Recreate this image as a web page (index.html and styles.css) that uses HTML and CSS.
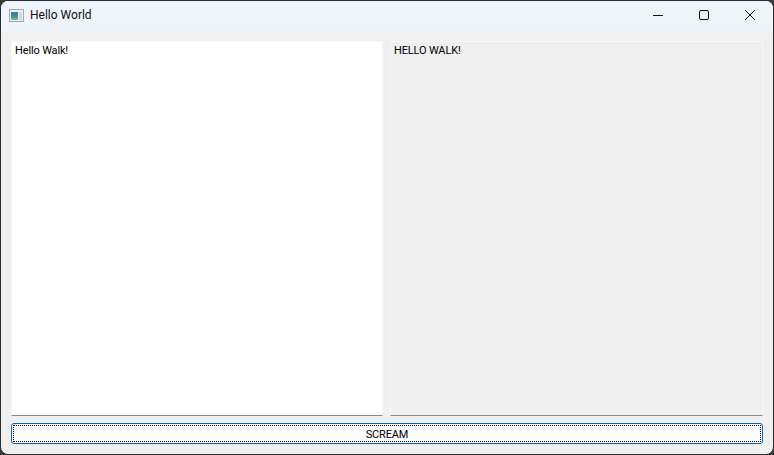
FILE: index.html
```html
<!DOCTYPE html>
<html lang="en">
<head>
    <meta charset="UTF-8">
    <title>Hello World</title>
    <link rel="stylesheet" href="styles.css">
</head>
<body>
    <div class="window">
        <div class="titlebar">
            <svg class="app-icon" width="15" height="13" viewBox="0 0 15 13">
                <defs>
                    <linearGradient id="pane" x1="0" y1="0" x2="0" y2="1">
                        <stop offset="0" stop-color="#3f78b0"/>
                        <stop offset="0.55" stop-color="#3f8f92"/>
                        <stop offset="1" stop-color="#8fc08a"/>
                    </linearGradient>
                </defs>
                <rect x="0.5" y="0.5" width="14" height="12" fill="#eef0f2" stroke="#a3a9ad"/>
                <rect x="2" y="3" width="7" height="8" fill="url(#pane)"/>
                <rect x="10" y="3" width="3" height="8" fill="#d5dcde"/>
            </svg>
            <span class="title">Hello World</span>
            <div class="controls">
                <button class="control">
                    <svg width="12" height="12" viewBox="0 0 12 12"><path d="M1 6.5H11" stroke="#111" fill="none"/></svg>
                </button>
                <button class="control">
                    <svg width="12" height="12" viewBox="0 0 12 12"><rect x="1.5" y="1.5" width="9" height="9" rx="1.5" stroke="#111" fill="none"/></svg>
                </button>
                <button class="control">
                    <svg width="12" height="12" viewBox="0 0 12 12"><path d="M1 1L11 11M11 1L1 11" stroke="#111" fill="none"/></svg>
                </button>
            </div>
        </div>
        <div class="content">
            <div class="panes">
                <div class="pane editable">Hello Walk!</div>
                <div class="pane readonly">HELLO WALK!</div>
            </div>
            <button class="scream"><span class="scream-inner">SCREAM</span></button>
        </div>
    </div>
</body>
</html>
```

FILE: styles.css
```css
html, body {
    margin: 0;
    height: 100%;
    overflow: hidden;
    background: #3a3a3a;
}
.window {
    box-sizing: border-box;
    width: 774px;
    height: 455px;
    display: flex;
    flex-direction: column;
    background: #f0f0f0;
    border: 1px solid #2b2b2b;
    border-radius: 8px;
    overflow: hidden;
    font-family: Roboto, sans-serif;
    font-size: 11px;
    letter-spacing: -0.15px;
    color: #000;
}
.titlebar {
    height: 30px;
    flex: none;
    display: flex;
    align-items: center;
    background: #eff4fb;
    padding-left: 8px;
}
.app-icon {
    margin-right: 6px;
    margin-bottom: 1px;
}
.title {
    font-size: 12px;
    letter-spacing: 0;
    color: #111;
    padding-bottom: 2px;
}
.controls {
    margin-left: auto;
    display: flex;
    height: 100%;
}
.control {
    width: 46px;
    padding: 0 0 2px;
    border: none;
    background: none;
    display: flex;
    align-items: center;
    justify-content: center;
}
.content {
    flex: 1;
    display: flex;
    flex-direction: column;
    padding: 10px 10px 10px;
    gap: 7px;
}
.panes {
    flex: 1;
    display: grid;
    grid-template-columns: 372px 1fr;
    gap: 7px;
}
.pane {
    padding: 2px 3px;
    border: 1px solid #f8f8f8;
    border-bottom: 1px solid #8a8a8a;
}
.editable {
    background: #fff;
}
.readonly {
    background: #efeff0;
}
.scream {
    height: 21px;
    padding: 0;
    flex: none;
    background: #fdfdfd;
    border: 1px solid #0067c0;
    border-radius: 3px;
    font: inherit;
    letter-spacing: inherit;
    color: #000;
    display: flex;
}
.scream-inner {
    flex: 1;
    margin: 1px;
    padding-top: 1px;
    border: 1px dotted #000;
    display: flex;
    align-items: center;
    justify-content: center;
}
```
